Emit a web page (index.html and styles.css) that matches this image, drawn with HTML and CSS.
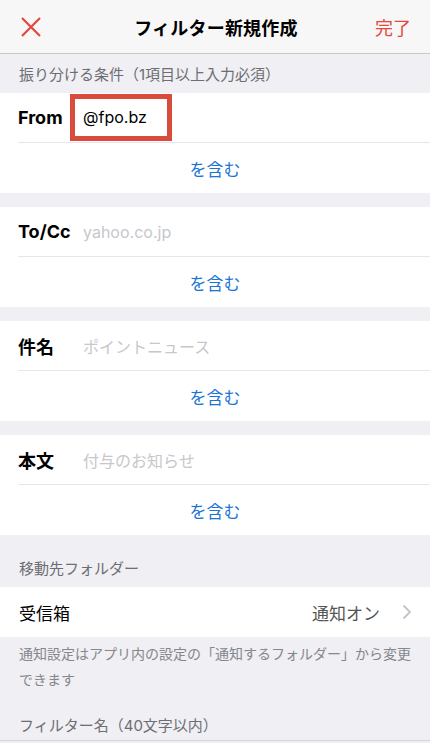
FILE: index.html
```html
<!DOCTYPE html>
<html lang="ja">

<head>
    <meta charset="UTF-8">
    <meta name="viewport" content="width=device-width, initial-scale=1.0">
    <title>フィルター新規作成</title>
    <link rel="stylesheet" href="styles.css">
</head>

<body>

    <header class="navbar">
        <button class="nav-close" aria-label="閉じる">
            <svg width="20" height="20" viewBox="0 0 20 20">
                <path d="M1 1 L19 19 M19 1 L1 19" stroke="#e5473d" stroke-width="2.2" fill="none" />
            </svg>
        </button>
        <h1 class="nav-title">フィルター新規作成</h1>
        <button class="nav-done">完了</button>
    </header>

    <div class="section-title first">振り分ける条件（1項目以上入力必須）</div>

    <div class="group">
        <div class="row field">
            <span class="field-label">From</span>
            <span class="field-value highlighted">@fpo.bz</span>
        </div>
        <div class="row contains">を含む</div>
    </div>

    <div class="group">
        <div class="row field">
            <span class="field-label">To/Cc</span>
            <span class="field-value placeholder">yahoo.co.jp</span>
        </div>
        <div class="row contains">を含む</div>
    </div>

    <div class="group">
        <div class="row field">
            <span class="field-label">件名</span>
            <span class="field-value placeholder">ポイントニュース</span>
        </div>
        <div class="row contains">を含む</div>
    </div>

    <div class="group">
        <div class="row field">
            <span class="field-label">本文</span>
            <span class="field-value placeholder">付与のお知らせ</span>
        </div>
        <div class="row contains">を含む</div>
    </div>

    <div class="section-title">移動先フォルダー</div>

    <div class="folder-row">
        <span class="folder-name">受信箱</span>
        <span class="folder-status">通知オン</span>
        <svg class="chevron" width="10" height="16" viewBox="0 0 10 16">
            <path d="M1.5 1.5 L8 8 L1.5 14.5" stroke="#c4c4c9" stroke-width="1.8" fill="none" />
        </svg>
    </div>

    <p class="note">通知設定はアプリ内の設定の「通知するフォルダー」から変更できます</p>

    <div class="section-title last">フィルター名（40文字以内）</div>

</body>

</html>
```

FILE: styles.css
```css
:root {
    --font: "Inter", "Noto Sans CJK JP", sans-serif;
    --page-bg: #efeff4;
    --nav-bg: #f7f7f8;
    --red: #e5473d;
    --blue: #1a74d6;
    --gray-text: #6d6d72;
    --placeholder: #c7c7cc;
    --line: #e6e6ea;
}

* {
    margin: 0;
    padding: 0;
    box-sizing: border-box;
}

body {
    background-color: var(--page-bg);
    font-family: var(--font);
    color: #000;
    width: 430px;
    overflow: hidden;
}

.navbar {
    height: 54px;
    display: flex;
    align-items: center;
    justify-content: space-between;
    background-color: var(--nav-bg);
    border-bottom: 1px solid #c9c9cd;
    padding: 0 19px 0 21px;
}

.navbar button {
    background: none;
    border: none;
    font-family: var(--font);
}

.nav-close {
    width: 40px;
    display: flex;
    align-items: center;
    padding-top: 1px;
}

.nav-title {
    font-size: 18px;
    font-weight: 700;
    letter-spacing: 0.2px;
}

.nav-done {
    width: 40px;
    text-align: right;
    color: var(--red);
    font-size: 18px;
}

.section-title {
    height: 39px;
    display: flex;
    align-items: center;
    padding-left: 19px;
    font-size: 15px;
    color: var(--gray-text);
}

.section-title.last {
    height: 48px;
    padding-top: 16px;
    border-bottom: 1px solid #d6d6da;
}

.group {
    background-color: #fff;
    margin-bottom: 14px;
}

.row {
    height: 50px;
    display: flex;
    align-items: center;
}

.field {
    margin-left: 18px;
    border-bottom: 1px solid var(--line);
}

.field-label {
    width: 65px;
    font-size: 18px;
    font-weight: 700;
}

.field-value {
    font-size: 16px;
}

.placeholder {
    color: var(--placeholder);
}

.field-value.highlighted {
    display: flex;
    align-items: center;
    width: 102px;
    height: 47px;
    margin-left: -13px;
    padding: 0 0 1px 8px;
    border: 5px solid #d94b3b;
}

.contains {
    justify-content: center;
    color: var(--blue);
    font-size: 17px;
}

.group + .section-title {
    margin-top: -14px;
    height: 52px;
    padding-top: 12px;
}

.folder-row {
    height: 50px;
    display: flex;
    align-items: center;
    background-color: #fff;
    padding: 0 18px 0 19px;
    font-size: 17px;
}

.folder-name {
    flex: 1;
}

.folder-status {
    color: #555;
    margin-right: 22px;
}

.chevron {
    display: block;
}

.note {
    padding: 4px 19px 0;
    font-size: 14px;
    line-height: 26px;
    color: #86868b;
}
```
